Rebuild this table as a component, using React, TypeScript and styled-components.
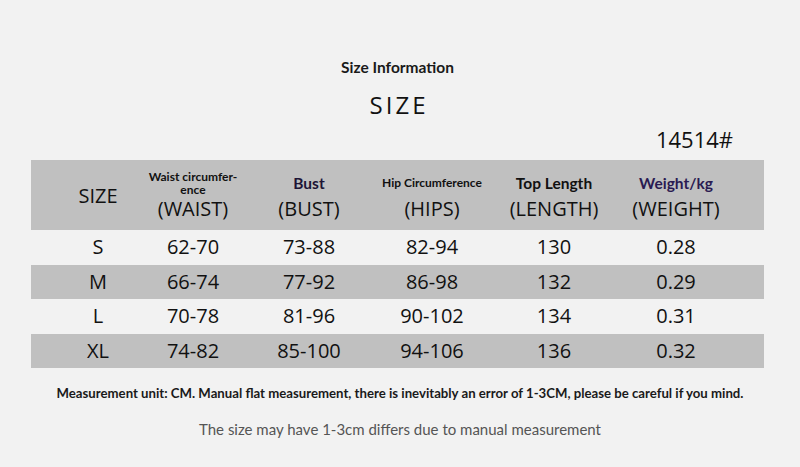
import styled, { createGlobalStyle } from 'styled-components'

const GlobalStyle = createGlobalStyle`
  html, body {
    margin: 0;
    padding: 0;
    background: #f2f2f2;
  }
`

type Column = {
  label: string
  labelSize: 'small' | 'large'
  labelColor?: string
  paren: string
}

const columns: Column[] = [
  { label: 'Waist circumfer-\nence', labelSize: 'small', paren: '(WAIST)' },
  { label: 'Bust', labelSize: 'large', labelColor: '#1d1436', paren: '(BUST)' },
  { label: 'Hip Circumference', labelSize: 'small', paren: '(HIPS)' },
  { label: 'Top Length', labelSize: 'large', paren: '(LENGTH)' },
  { label: 'Weight/kg', labelSize: 'large', labelColor: '#2a1b52', paren: '(WEIGHT)' },
]

const rows = [
  ['S', '62-70', '73-88', '82-94', '130', '0.28'],
  ['M', '66-74', '77-92', '86-98', '132', '0.29'],
  ['L', '70-78', '81-96', '90-102', '134', '0.31'],
  ['XL', '74-82', '85-100', '94-106', '136', '0.32'],
]

const App = () => {
  return (
    <>
      <GlobalStyle />
      <StyledPage>
        <StyledInfoTitle>Size Information</StyledInfoTitle>
        <StyledBigTitle>SIZE</StyledBigTitle>
        <StyledStyleNo>14514#</StyledStyleNo>
        <StyledTable>
          <StyledHeaderRow>
            <StyledHeaderSize>SIZE</StyledHeaderSize>
            {columns.map((col) => (
              <StyledHeaderCell key={col.paren}>
                <StyledHeaderLabel $size={col.labelSize} $color={col.labelColor}>
                  {col.label}
                </StyledHeaderLabel>
                <StyledParen>{col.paren}</StyledParen>
              </StyledHeaderCell>
            ))}
          </StyledHeaderRow>
          {rows.map((row, i) => (
            <StyledRow key={row[0]} $shaded={i % 2 === 1}>
              {row.map((value, j) => (
                <StyledCell key={j}>{value}</StyledCell>
              ))}
            </StyledRow>
          ))}
        </StyledTable>
        <StyledNote>
          Measurement unit: CM. Manual flat measurement, there is inevitably an error of 1-3CM,
          please be careful if you mind.
        </StyledNote>
        <StyledSubNote>The size may have 1-3cm differs due to manual measurement</StyledSubNote>
      </StyledPage>
    </>
  )
}

export default App

const StyledPage = styled.div`
  box-sizing: border-box;
  width: 800px;
  height: 467px;
  padding: 58px 36px 0 31px;
  display: flex;
  flex-direction: column;
  align-items: stretch;
  background: #f2f2f2;
  color: #111;
  overflow: hidden;
`

const StyledInfoTitle = styled.div`
  font-family: Lato, 'Liberation Sans', sans-serif;
  font-weight: 700;
  font-size: 15.5px;
  line-height: 19px;
  text-align: center;
  color: #1a1a1a;
`

const StyledBigTitle = styled.div`
  margin-top: 12px;
  font-family: 'Open Sans', sans-serif;
  font-size: 24px;
  line-height: 32px;
  letter-spacing: 3px;
  text-align: center;
  padding-left: 3px;
  color: #111;
`

const StyledStyleNo = styled.div`
  margin-top: 5px;
  align-self: flex-end;
  margin-right: 31px;
  font-family: 'Open Sans', sans-serif;
  font-size: 22px;
  line-height: 26px;
  color: #111;
`

const StyledTable = styled.div`
  margin-top: 8px;
  width: 733px;
  display: flex;
  flex-direction: column;
`

const gridColumns = `
  display: grid;
  grid-template-columns: 95px 95px 137px 109px 135px 109px;
  padding-left: 19.5px;
`

const StyledHeaderRow = styled.div`
  ${gridColumns}
  height: 70px;
  background: #c0c0c0;
`

const StyledHeaderSize = styled.div`
  display: flex;
  align-items: center;
  justify-content: center;
  font-family: 'Open Sans', sans-serif;
  font-size: 20px;
  color: #111;
`

const StyledHeaderCell = styled.div`
  display: grid;
  grid-template-rows: 29px 24px;
  padding-top: 8px;
  justify-items: center;
  align-items: center;
`

const StyledHeaderLabel = styled.div<{ $size: 'small' | 'large'; $color?: string }>`
  font-family: Lato, 'Liberation Sans', sans-serif;
  font-weight: 700;
  font-size: ${(p) => (p.$size === 'small' ? '12px' : '15.5px')};
  line-height: ${(p) => (p.$size === 'small' ? '13px' : '18px')};
  color: ${(p) => p.$color ?? '#111'};
  white-space: pre;
  text-align: center;
`

const StyledParen = styled.div`
  font-family: 'Open Sans', sans-serif;
  font-size: 20px;
  line-height: 24px;
  color: #111;
  white-space: nowrap;
`

const StyledRow = styled.div<{ $shaded: boolean }>`
  ${gridColumns}
  height: 34.5px;
  align-items: center;
  background: ${(p) => (p.$shaded ? '#c0c0c0' : 'transparent')};
`

const StyledCell = styled.div`
  text-align: center;
  font-family: 'Open Sans', sans-serif;
  font-size: 20px;
  line-height: 24px;
  color: #111;
  white-space: nowrap;
`

const StyledNote = styled.div`
  margin-top: 17px;
  margin-right: -36px;
  margin-left: -31px;
  font-family: Lato, 'Liberation Sans', sans-serif;
  font-weight: 700;
  font-size: 13.2px;
  line-height: 16px;
  text-align: center;
  color: #1a1a1a;
`

const StyledSubNote = styled.div`
  margin-top: 19px;
  margin-right: -36px;
  margin-left: -31px;
  font-family: Lato, 'Liberation Sans', sans-serif;
  font-size: 15px;
  line-height: 18px;
  text-align: center;
  color: #555;
`
